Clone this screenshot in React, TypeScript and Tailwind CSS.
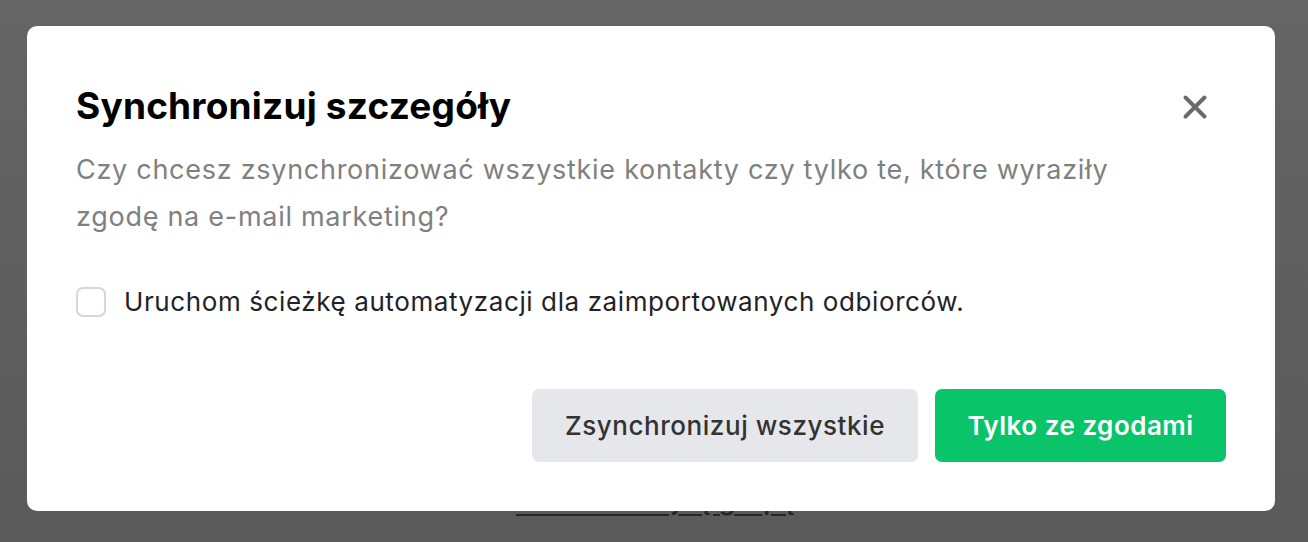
import { X } from "lucide-react";

const App = () => {
  return (
    <div className="relative h-[542px] w-full overflow-hidden bg-gradient-to-b from-[#656565] to-[#5a5a5a] font-['Inter',sans-serif]">
      {/* page behind the overlay */}
      <div className="flex justify-center pt-[481px] pl-[4px]">
        <span className="text-[26px] font-semibold tracking-[0.6px] text-[#262626] underline underline-offset-4">
          Utwórz kolejną grupę
        </span>
      </div>

      <div className="absolute left-[27px] top-[26px] w-[1248px] rounded-[10px] bg-white px-[49px] pt-[52px] pb-[49px]">
        <div className="flex items-start justify-between">
          <h2 className="text-[37px] font-bold leading-[56px] tracking-[0.2px] text-black">
            Synchronizuj szczegóły
          </h2>
          <button className="mr-[12px] mt-[10px] text-[#6b6b6b]">
            <X className="h-[38px] w-[38px]" strokeWidth={2.5} />
          </button>
        </div>
        <p className="mt-[12px] max-w-[1080px] text-[27px] leading-[47px] tracking-[0.72px] text-[#808080]">
          Czy chcesz zsynchronizować wszystkie kontakty czy tylko te, które wyraziły zgodę na
          e-mail marketing?
        </p>

        <label className="mt-[42px] flex items-center gap-[18px]">
          <span className="h-[30px] w-[30px] rounded-[7px] border-2 border-[#d4d7dc] bg-white" />
          <span className="text-[26px] tracking-[0.6px] text-[#1f2328]">
            Uruchom ścieżkę automatyzacji dla zaimportowanych odbiorców.
          </span>
        </label>

        <div className="mt-[68px] flex justify-end gap-[17px]">
          <button className="h-[73px] w-[386px] rounded-[7px] bg-[#e6e7ea] text-[26px] font-medium tracking-[0.55px] text-[#333333]">
            Zsynchronizuj wszystkie
          </button>
          <button className="h-[73px] w-[291px] rounded-[7px] bg-[#0ac46a] text-[26px] font-semibold tracking-[0.5px] text-white">
            Tylko ze zgodami
          </button>
        </div>
      </div>
    </div>
  );
};

export default App;
